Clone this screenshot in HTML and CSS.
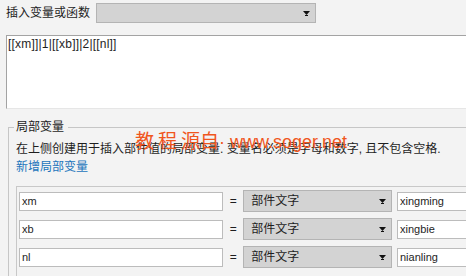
FILE: index.html
```html
<!DOCTYPE html>
<html lang="zh-CN">
<head>
  <meta charset="UTF-8" />
  <title>局部变量</title>
  <link rel="stylesheet" href="styles.css">
</head>
<body>

<div class="toolbar">
  <span class="toolbar-label">插入变量或函数</span>
  <div class="combo combo-wide">
    <svg class="arrow" width="7" height="5" viewBox="0 0 7 5"><polygon points="0,0 7,0 3.5,4" fill="#111"/><rect x="2" y="4" width="3" height="1" fill="#111"/></svg>
  </div>
</div>

<div class="code">[[xm]]|1|[[xb]]|2|[[nl]]</div>

<fieldset class="vars">
  <legend>局部变量</legend>
  <p class="hint">在上侧创建用于插入部件值的局部变量. 变量名必须是字母和数字, 且不包含空格.</p>
  <a class="add-link" href="#">新增局部变量</a>

  <div class="var-list">
    <div class="var-row">
      <div class="field field-name">xm</div>
      <span class="eq">=</span>
      <div class="combo combo-type">部件文字
        <svg class="arrow" width="7" height="5" viewBox="0 0 7 5"><polygon points="0,0 7,0 3.5,4" fill="#111"/><rect x="2" y="4" width="3" height="1" fill="#111"/></svg>
      </div>
      <div class="field field-value">xingming</div>
    </div>
    <div class="var-row">
      <div class="field field-name">xb</div>
      <span class="eq">=</span>
      <div class="combo combo-type">部件文字
        <svg class="arrow" width="7" height="5" viewBox="0 0 7 5"><polygon points="0,0 7,0 3.5,4" fill="#111"/><rect x="2" y="4" width="3" height="1" fill="#111"/></svg>
      </div>
      <div class="field field-value">xingbie</div>
    </div>
    <div class="var-row">
      <div class="field field-name">nl</div>
      <span class="eq">=</span>
      <div class="combo combo-type">部件文字
        <svg class="arrow" width="7" height="5" viewBox="0 0 7 5"><polygon points="0,0 7,0 3.5,4" fill="#111"/><rect x="2" y="4" width="3" height="1" fill="#111"/></svg>
      </div>
      <div class="field field-value">nianling</div>
    </div>
  </div>
</fieldset>

<div class="watermark"><span class="wm-cn wm-first">教程</span><span class="wm-cn wm-second">源自</span><span class="wm-dot">·</span><span class="wm-url">www.soger.net</span></div>

</body>
</html>
```

FILE: styles.css
```css
html {
  overflow: hidden;
}

body {
  font-family: "Liberation Sans", "Noto Sans CJK SC", sans-serif;
  font-size: 12px;
  background: #f3f3f3;
  color: #1e1e1e;
  margin: 0;
  position: relative;
  width: 520px;
}

.toolbar {
  display: flex;
  align-items: center;
  height: 20px;
  padding: 3px 0 0 6px;
}

.toolbar-label {
  width: 90px;
  line-height: 16px;
}

.combo {
  position: relative;
  box-sizing: border-box;
  background: #d3d3d3;
  border: 1px solid #b4b4b4;
}

.combo .arrow {
  position: absolute;
  right: 5px;
  top: 50%;
  margin-top: -2px;
}

.combo-wide {
  width: 220px;
  height: 20px;
}

.code {
  box-sizing: border-box;
  margin: 12px 0 0 6px;
  width: 500px;
  height: 74px;
  background: #fff;
  border: 1px solid #a3a3a3;
  border-bottom-color: #e6e6e6;
  padding: 0 1px;
  line-height: 16px;
  letter-spacing: 0.2px;
}

.vars {
  margin: 10px 0 0 8px;
  padding: 0 0 0 7px;
  border: 1px solid #c6c6c6;
  min-width: 0;
  width: 500px;
}

.vars legend {
  padding: 0 4px 0 2px;
  margin-left: -2px;
  line-height: 16px;
}

.hint {
  margin: 5px 0 0;
  line-height: 18px;
}

.add-link {
  display: block;
  color: #1b75bc;
  text-decoration: none;
  line-height: 18px;
}

.var-list {
  margin-top: 10px;
  border: 1px solid #c8c8c8;
  border-right: none;
  padding: 3px 0 10px 2px;
  display: flex;
  flex-direction: column;
  gap: 6px;
}

.var-row {
  display: flex;
  align-items: center;
  height: 22px;
}

.field {
  box-sizing: border-box;
  height: 19px;
  line-height: 17px;
  font-size: 11px;
  background: #fff;
  border: 1px solid #bcbcbc;
  padding: 0 2px;
}

.field-name {
  width: 206px;
}

.eq {
  width: 20px;
  text-align: center;
}

.combo-type {
  width: 150px;
  height: 22px;
  line-height: 20px;
  padding-left: 7px;
}

.field-value {
  margin-left: 5px;
  width: 120px;
}

.watermark {
  position: absolute;
  left: 135px;
  top: 131px;
  display: flex;
  align-items: baseline;
  color: #f0561d;
  font-size: 18px;
  line-height: 22px;
  white-space: nowrap;
}

.wm-cn {
  font-size: 19px;
}

.wm-first {
  letter-spacing: 4px;
}

.wm-second {
  letter-spacing: 0;
}

.wm-dot {
  margin-right: 5px;
}
```
